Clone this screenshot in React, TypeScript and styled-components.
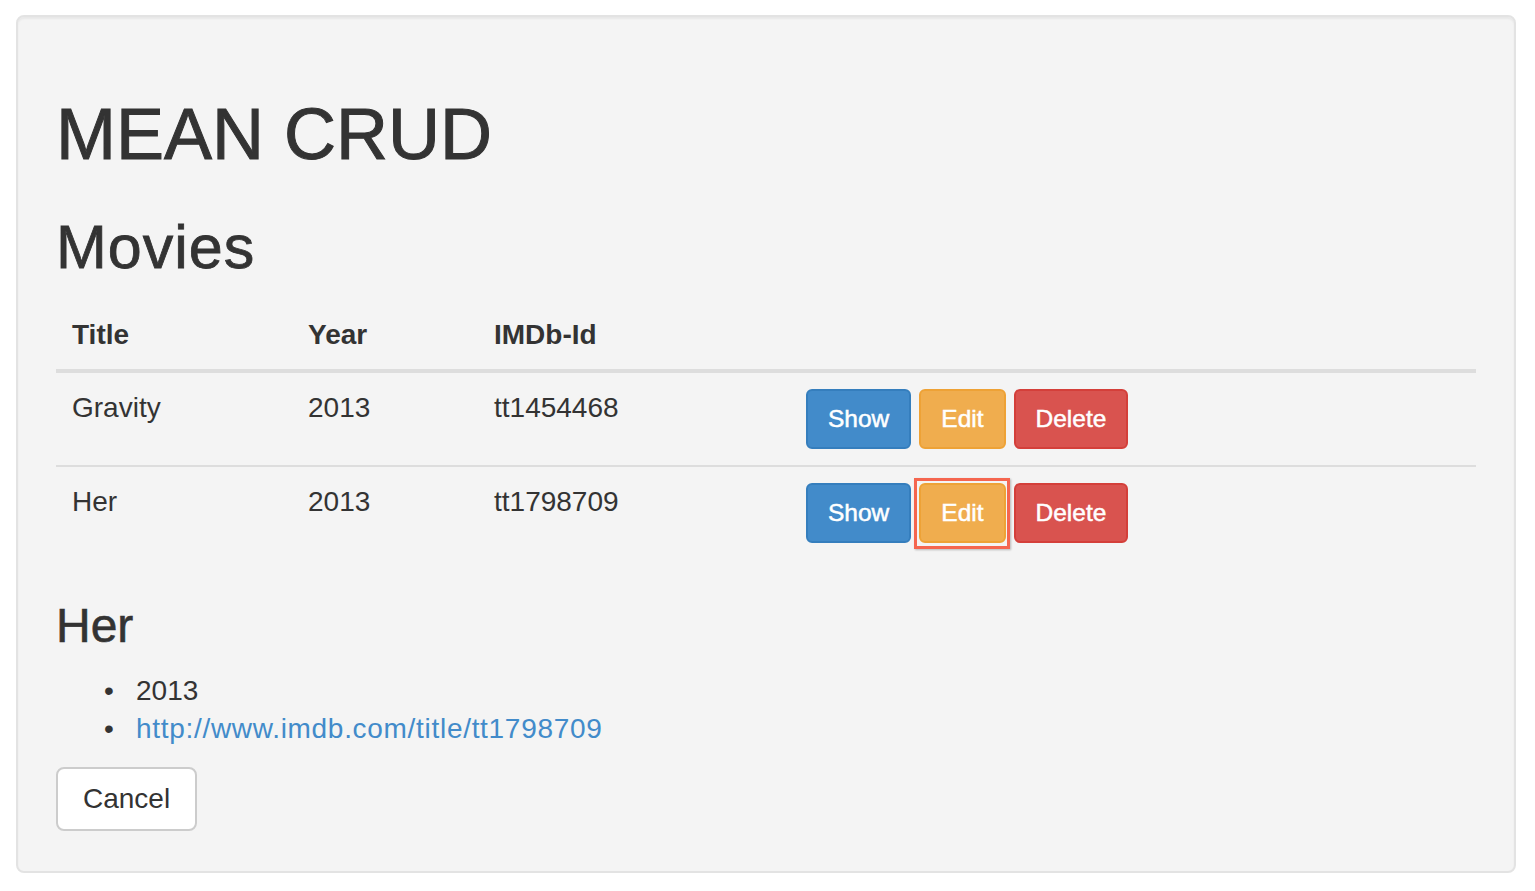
import React from "react";
import styled, { createGlobalStyle, css } from "styled-components";

const GlobalStyle = createGlobalStyle`
  *, *::before, *::after { box-sizing: border-box; }
  html, body { margin: 0; padding: 0; background: #ffffff; }
  body {
    font-family: "Liberation Sans", Arial, Helvetica, sans-serif;
    font-size: 28px;
    line-height: 40px;
    color: #333333;
  }
`;

const Page = styled.div`
  padding: 15px 0 0 16px;
`;

const Well = styled.div`
  width: 1500px;
  padding: 38px 38px 40px;
  background: #f4f4f4;
  border: 2px solid #e3e3e3;
  border-radius: 8px;
  box-shadow: inset 0 2px 2px rgba(0, 0, 0, 0.05);
`;

const Title = styled.h1`
  margin: 40px 0 20px;
  font-size: 72px;
  line-height: 79px;
  font-weight: 500;
  color: #333333;
  -webkit-text-stroke: 1px #333333;
`;

const SectionTitle = styled.h2`
  margin: 40px 0 17px;
  font-size: 61px;
  line-height: 66px;
  font-weight: 500;
  color: #333333;
  letter-spacing: 1px;
  -webkit-text-stroke: 0.8px #333333;
`;

const DetailTitle = styled.h3`
  margin: 40px 0 20px;
  font-size: 48px;
  line-height: 53px;
  font-weight: 500;
  color: #333333;
  -webkit-text-stroke: 0.6px #333333;
`;

const Table = styled.table`
  width: 100%;
  border-collapse: collapse;
  border-spacing: 0;
  margin: 0 0 40px;
`;

const HeadCell = styled.th<{ $w?: number }>`
  text-align: left;
  font-weight: 700;
  padding: 18px 16px 14px;
  line-height: 40px;
  vertical-align: bottom;
  border-bottom: 4px solid #dddddd;
  ${(p) => p.$w && css`width: ${p.$w}px;`}
`;

const Cell = styled.td`
  padding: 16px;
  line-height: 38px;
  vertical-align: top;
  border-top: 2px solid #dddddd;
`;

const Actions = styled.div`
  display: flex;
  gap: 8px;
`;

type Variant = "primary" | "warning" | "danger";

const variants: Record<Variant, { bg: string; border: string }> = {
  primary: { bg: "#428bca", border: "#357ebd" },
  warning: { bg: "#f0ad4e", border: "#eea236" },
  danger: { bg: "#d9534f", border: "#d43f3a" },
};

const SmallButton = styled.button<{ $variant: Variant; $focused?: boolean }>`
  position: relative;
  font-family: inherit;
  font-size: 24.5px;
  line-height: 36px;
  padding: 10px 20px;
  border-radius: 6px;
  border: 2px solid ${(p) => variants[p.$variant].border};
  background: ${(p) => variants[p.$variant].bg};
  color: #ffffff;
  -webkit-text-stroke: 0.5px #ffffff;
  cursor: pointer;
  ${(p) =>
    p.$focused &&
    css`
      &::after {
        content: "";
        position: absolute;
        inset: -7px -6px -8px -7px;
        border: 3px solid #f5664f;
        box-shadow: 1px 1px 2px rgba(0, 0, 0, 0.25);
        pointer-events: none;
      }
    `}
`;

const List = styled.ul`
  margin: 0 0 19px;
  padding-left: 80px;
  list-style: none;
  font-size: 28px;
`;

const Item = styled.li`
  line-height: 38px;
  &::before {
    content: "•";
    display: inline-block;
    width: 32px;
    margin-left: -32px;
  }
`;

const Link = styled.a`
  color: #428bca;
  text-decoration: none;
  letter-spacing: 0.7px;
`;

const DefaultButton = styled.button`
  font-family: inherit;
  font-size: 28px;
  line-height: 40px;
  padding: 10px 25px;
  border-radius: 8px;
  border: 2px solid #cccccc;
  background: #ffffff;
  color: #333333;
  cursor: pointer;
`;

const movies = [
  { title: "Gravity", year: 2013, imdb: "tt1454468" },
  { title: "Her", year: 2013, imdb: "tt1798709" },
];

export default function App() {
  return (
    <>
      <GlobalStyle />
      <Page>
        <Well>
          <Title>MEAN CRUD</Title>
          <SectionTitle>Movies</SectionTitle>
          <Table>
            <thead>
              <tr>
                <HeadCell $w={236}>Title</HeadCell>
                <HeadCell $w={186}>Year</HeadCell>
                <HeadCell $w={312}>IMDb-Id</HeadCell>
                <HeadCell />
              </tr>
            </thead>
            <tbody>
              {movies.map((m, i) => (
                <tr key={m.imdb}>
                  <Cell>{m.title}</Cell>
                  <Cell>{m.year}</Cell>
                  <Cell>{m.imdb}</Cell>
                  <Cell>
                    <Actions>
                      <SmallButton $variant="primary">Show</SmallButton>
                      <SmallButton $variant="warning" $focused={i === 1}>
                        Edit
                      </SmallButton>
                      <SmallButton $variant="danger">Delete</SmallButton>
                    </Actions>
                  </Cell>
                </tr>
              ))}
            </tbody>
          </Table>
          <DetailTitle>Her</DetailTitle>
          <List>
            <Item>2013</Item>
            <Item>
              <Link href="#">http://www.imdb.com/title/tt1798709</Link>
            </Item>
          </List>
          <DefaultButton>Cancel</DefaultButton>
        </Well>
      </Page>
    </>
  );
}
